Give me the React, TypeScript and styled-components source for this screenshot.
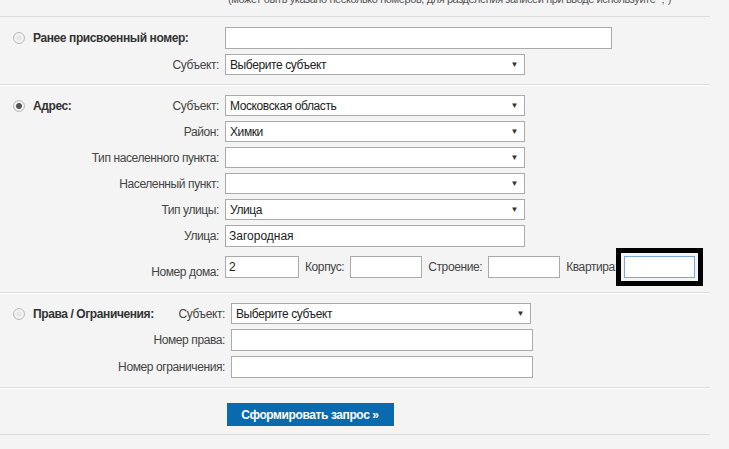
import React from 'react';
import styled, { createGlobalStyle } from 'styled-components';

const Global = createGlobalStyle`
  body {
    margin: 0;
    background: #f4f4f4;
    font-family: 'Liberation Sans', Arial, sans-serif;
    font-size: 12px;
    letter-spacing: -0.4px;
    color: #333;
    overflow: hidden;
  }
`;

const Page = styled.div`
  width: 710px;
`;

const Note = styled.div`
  margin-top: -7px;
  padding: 0 0 7px 228px;
  height: 16px;
  color: #555;
  font-size: 11px;
  white-space: nowrap;
  border-bottom: 1px solid #dcdcdc;
`;

const Section = styled.div<{ $side: number; $label: number }>`
  display: grid;
  grid-template-columns: ${(p) => p.$side}px ${(p) => p.$label}px auto;
  column-gap: 6px;
  row-gap: 5px;
  align-items: center;
  padding: 10px 0 9px 13px;
  border-bottom: 1px solid #dcdcdc;
  box-shadow: 0 1px 0 #fff;
`;

const Title = styled.label<{ $span?: boolean }>`
  display: flex;
  align-items: center;
  gap: 8px;
  font-weight: bold;
  color: #333;
  white-space: nowrap;
  grid-column: ${(p) => (p.$span ? '1 / 3' : '1')};
`;

const Radio = styled.span<{ $on?: boolean }>`
  width: 12px;
  height: 12px;
  border-radius: 50%;
  border: 1px solid #bbb;
  background: radial-gradient(circle, ${(p) => (p.$on ? '#555 0 2.5px' : '#e6e6e6 0 2px')}, #f4f4f4 3.5px, #e0e0e0);
  box-sizing: border-box;
  flex: none;
`;

const FieldLabel = styled.span<{ $wide?: boolean }>`
  grid-column: ${(p) => (p.$wide ? '1 / 3' : '2')};
  text-align: right;
  color: #444;
  white-space: nowrap;
`;

const Input = styled.input<{ $w?: number }>`
  width: ${(p) => p.$w ?? 387}px;
  height: 22px;
  box-sizing: border-box;
  border: 1px solid #aaa;
  background: #fff;
  font: inherit;
  padding: 0 3px;
  color: #222;
  &.focus {
    border-color: #7aa7d6;
    outline: 5px solid #000;
    outline-offset: 3px;
  }
`;

const Select = styled.div<{ $w?: number }>`
  width: ${(p) => p.$w ?? 300}px;
  height: 21px;
  box-sizing: border-box;
  border: 1px solid #aaa;
  background: #fff;
  display: flex;
  align-items: center;
  padding: 0 6px 0 4px;
  color: #222;
  &::after {
    content: '▼';
    margin-left: auto;
    font-size: 8px;
    color: #333;
  }
`;

const Cell = styled.div`
  grid-column: 3;
  display: flex;
  align-items: center;
  gap: 6px;
  color: #444;
`;

const HouseRow = styled(Cell)`
  margin-top: 4px;
  margin-bottom: 5px;
`;

const Footer = styled.div`
  display: flex;
  justify-content: center;
  padding: 15px 0 8px;
  margin-left: -90px;
  border-bottom: 1px solid #dcdcdc;
  box-shadow: 0 1px 0 #fff;
`;

const Button = styled.button`
  background: #0a6aae;
  color: #fff;
  font: bold 12px 'Liberation Sans', Arial, sans-serif;
  letter-spacing: -0.4px;
  white-space: nowrap;
  border: none;
  height: 23px;
  padding: 0 8px;
  width: 167px;
`;

export default function App() {
  return (
    <Page>
      <Global />
      <Note>(может быть указано несколько номеров, для разделения записей при вводе используйте ";")</Note>

      <Section $side={120} $label={80}>
        <Title $span>
          <Radio />
          Ранее присвоенный номер:
        </Title>
        <Cell><Input /></Cell>
        <FieldLabel>Субъект:</FieldLabel>
        <Cell><Select>Выберите субъект</Select></Cell>
      </Section>

      <Section $side={54} $label={146}>
        <Title>
          <Radio $on />
          Адрес:
        </Title>
        <FieldLabel>Субъект:</FieldLabel>
        <Cell><Select>Московская область</Select></Cell>
        <FieldLabel>Район:</FieldLabel>
        <Cell><Select>Химки</Select></Cell>
        <FieldLabel>Тип населенного пункта:</FieldLabel>
        <Cell><Select /></Cell>
        <FieldLabel>Населенный пункт:</FieldLabel>
        <Cell><Select /></Cell>
        <FieldLabel>Тип улицы:</FieldLabel>
        <Cell><Select>Улица</Select></Cell>
        <FieldLabel>Улица:</FieldLabel>
        <Cell><Input $w={300} defaultValue="Загородная" /></Cell>
        <FieldLabel style={{ marginTop: 9 }}>Номер дома:</FieldLabel>
        <HouseRow>
          <Input $w={74} defaultValue="2" />
          Корпус:
          <Input $w={72} />
          Строение:
          <Input $w={72} />
          Квартира:
          <Input $w={71} className="focus" />
        </HouseRow>
      </Section>

      <Section $side={145} $label={61}>
        <Title>
          <Radio />
          Права / Ограничения:
        </Title>
        <FieldLabel>Субъект:</FieldLabel>
        <Cell><Select>Выберите субъект</Select></Cell>
        <FieldLabel $wide>Номер права:</FieldLabel>
        <Cell><Input $w={302} /></Cell>
        <FieldLabel $wide>Номер ограничения:</FieldLabel>
        <Cell><Input $w={302} /></Cell>
      </Section>

      <Footer>
        <Button>Сформировать запрос »</Button>
      </Footer>
    </Page>
  );
}
